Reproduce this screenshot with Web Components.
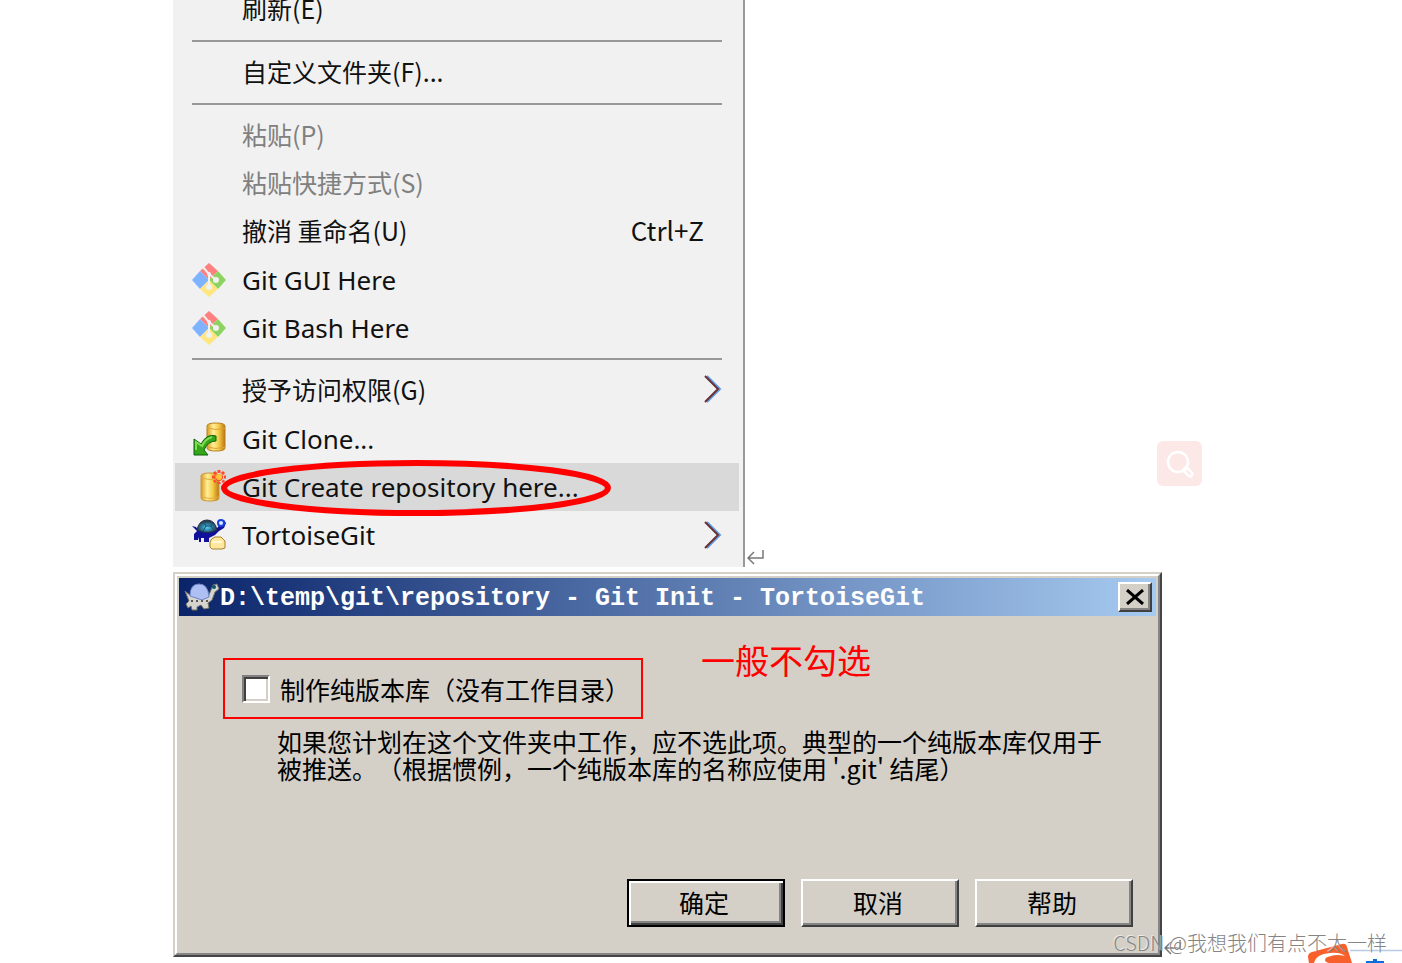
<!DOCTYPE html>
<html lang="zh-CN">
<head>
<meta charset="utf-8">
<meta name="viewport" content="width=device-width, initial-scale=1">
<title>Git Init</title>
<style>
    body {
        margin: 0;
        background: #fff;
        color: #111;
        font-family: "Noto Sans", "Noto Sans CJK SC", sans-serif;
    }
</style>
</head>
<body>
<doc-page>
    <doc-line>
        <context-menu>
            <menu-item>刷新(E)</menu-item>
            <menu-separator></menu-separator>
            <menu-item>自定义文件夹(F)...</menu-item>
            <menu-separator></menu-separator>
            <menu-item disabled>粘贴(P)</menu-item>
            <menu-item disabled>粘贴快捷方式(S)</menu-item>
            <menu-item shortcut="Ctrl+Z">撤消 重命名(U)</menu-item>
            <menu-item icon="git" latin>Git GUI Here</menu-item>
            <menu-item icon="git" latin>Git Bash Here</menu-item>
            <menu-separator></menu-separator>
            <menu-item submenu>授予访问权限(G)</menu-item>
            <menu-item icon="clone" latin>Git Clone...</menu-item>
            <menu-item icon="create" latin active circled>Git Create repository here...</menu-item>
            <menu-item icon="tortoise" latin submenu>TortoiseGit</menu-item>
        </context-menu>
    </doc-line>
    <doc-line>
        <init-dialog caption="D:\temp\git\repository - Git Init - TortoiseGit">
            <bare-option slot="option">制作纯版本库（没有工作目录）</bare-option>
            <span slot="note">一般不勾选</span>
            <span slot="help">如果您计划在这个文件夹中工作，应不选此项。典型的一个纯版本库仅用于<br>被推送。（根据惯例，一个纯版本库的名称应使用 '.git' 结尾）</span>
            <dialog-button slot="actions" default>确定</dialog-button>
            <dialog-button slot="actions">取消</dialog-button>
            <dialog-button slot="actions">帮助</dialog-button>
        </init-dialog>
    </doc-line>
    <search-badge slot="overlay"></search-badge>
    <ime-bar slot="overlay"></ime-bar>
    <page-watermark slot="overlay">CSDN @我想我们有点不太一样</page-watermark>
</doc-page>

<script>
const ICONS = {
    git: `
        <svg width="34" height="34" viewBox="0 0 34 34">
            <path fill="#ff8080" d="M17 0l9 8-9 9-9-9z"/>
            <path fill="#80b3ff" d="M8 8l9 9-9 9-8-9z"/>
            <path fill="#8dd35f" d="M26 8l8 9-8 9-9-9z"/>
            <path fill="#ffe680" d="M17 17l9 9-9 8-9-8z"/>
            <path fill="none" stroke="#f1f1f1" stroke-width="2" d="M11 4l6 7v12M17 11l7 6"/>
            <g fill="#f1f1f1"><circle cx="17" cy="11" r="2"/><circle cx="24" cy="17" r="3"/><circle cx="17" cy="24" r="3"/></g>
        </svg>`,
    clone: `
        <svg width="34" height="34" viewBox="0 0 34 34">
            <defs><linearGradient id="gold"><stop offset="0" stop-color="#d99a1c"/><stop offset=".35" stop-color="#ffef9a"/><stop offset=".65" stop-color="#f6cb48"/><stop offset="1" stop-color="#bd7612"/></linearGradient></defs>
            <path fill="url(#gold)" stroke="#b8801d" d="M15 4q0-3 9-3t9 3v22q0 3-9 3t-9-3z"/>
            <path fill="none" stroke="#dda236" d="M15 6q9 3 18 0M15 25q9 3 18 0"/>
            <path fill="#35a51c" stroke="#0b6407" d="M24 14q-9-3-15 8l-7-5v16h14l-4-5q4-9 12-9z"/>
            <path fill="none" stroke="#84dc55" stroke-width="2" d="M20 15q-7 2-10 9l-6-4v8"/>
        </svg>`,
    create: `
        <svg width="34" height="34" viewBox="0 0 34 34">
            <defs><linearGradient id="gold"><stop offset="0" stop-color="#d99a1c"/><stop offset=".35" stop-color="#ffef9a"/><stop offset=".65" stop-color="#f6cb48"/><stop offset="1" stop-color="#bd7612"/></linearGradient></defs>
            <path fill="url(#gold)" stroke="#c9963a" d="M9 6q0-3 9-3t9 3v22q0 3-9 3t-9-3z"/>
            <path fill="none" stroke="#e0ab44" d="M9 8q9 3 18 0M9 27q9 3 18 0"/>
            <path stroke="#ff4b2b" stroke-width="3" stroke-dasharray="3 1" d="M27 0v14M20 7h14M22 2l10 10M32 2L22 12"/>
            <circle cx="27" cy="7" r="3" fill="#ffc53a"/>
        </svg>`,
    tortoise: `
        <svg width="34" height="34" viewBox="0 0 34 34">
            <defs><radialGradient id="shell" cx=".5" cy=".6"><stop offset="0" stop-color="#5fd0ea"/><stop offset=".5" stop-color="#2786a4"/><stop offset="1" stop-color="#2a3a48"/></radialGradient></defs>
            <path fill="#10109a" d="M0 8l4 1 3 4h15l4-4 2-3q0-4 4-4l2 3-2 5-5 3-4 4-6 3v4h-5v-4h-3v4H7v-5l-1 3H2v-6l3-3z"/>
            <path fill="url(#shell)" stroke="#20304a" d="M5 12Q7 2 15 2t10 10q-9 5-20 0z"/>
            <path fill="none" stroke="#214b78" d="M11 4l3 4-3 5M14 8h5l3 5M19 8l2-3"/>
            <circle cx="29" cy="5" r="4" fill="#1740e0"/><circle cx="29" cy="5" r="2" fill="#dce8ff"/>
            <path fill="#ffe7a0" stroke="#a9822a" d="M18 24q1-4 5-5h6l4 4v7l-3 1H20l-2-2z"/>
            <path fill="none" stroke="#fff8d5" stroke-width="2" d="M20 24h10"/>
        </svg>`
};

class DocPage extends HTMLElement {
    constructor() {
        super();
        this.attachShadow({mode: 'open'}).innerHTML = `
            <style>
                :host {
                    display: block;
                    position: relative;
                    box-sizing: border-box;
                    height: 100vh;
                    padding-left: 173px;
                    overflow: hidden;
                }
                main {
                    display: flex;
                    flex-direction: column;
                    gap: 5px;
                }
            </style>
            <main><slot></slot></main>
            <slot name="overlay"></slot>
        `;
    }
}

// A line of the document, closed with the paragraph mark
class DocLine extends HTMLElement {
    constructor() {
        super();
        this.attachShadow({mode: 'open'}).innerHTML = `
            <style>
                :host {
                    display: flex;
                    align-items: flex-end;
                }
                svg { flex: none; margin-left: 2px; }
            </style>
            <slot></slot>
            <svg width="18" height="18" viewBox="0 0 18 18" fill="none" stroke="#777" stroke-width="1.500" aria-hidden="true">
                <path d="M16 1v8H1M7 3L1 9l6 6"/>
            </svg>
        `;
    }
}

class ContextMenu extends HTMLElement {
    constructor() {
        super();
        this.attachShadow({mode: 'open'}).innerHTML = `
            <style>
                :host {
                    display: block;
                    box-sizing: border-box;
                    width: 572px;
                    padding: 0 4px 8px 2px;
                    background: #f1f1f1;
                    border-right: 2px solid #999;
                    overflow: hidden;
                }
                /* the menu is scrolled a little past its first entry */
                nav { margin-top: -14px; }
            </style>
            <nav><slot></slot></nav>
        `;
    }
}

class MenuSeparator extends HTMLElement {
    constructor() {
        super();
        this.attachShadow({mode: 'open'}).innerHTML = `
            <style>
                :host { display: block; padding: 6px 17px 7px; }
                div { height: 2px; background: #989898; }
            </style>
            <div role="separator"></div>
        `;
    }
}

class MenuItem extends HTMLElement {
    connectedCallback() {
        const icon = ICONS[this.getAttribute('icon')] || '';
        const shortcut = this.getAttribute('shortcut') || '';
        const arrow = this.hasAttribute('submenu') ? `
            <svg class="arrow" width="18" height="30" viewBox="0 0 18 30" fill="none" stroke-width="2">
                <path stroke="#5d9fe8" d="M3 2l13 13L3 28"/>
                <path stroke="#6b3035" d="M1 2l13 13L1 28"/>
            </svg>` : '';
        const ring = this.hasAttribute('circled') ? `
            <svg class="ring" width="390" height="56" viewBox="0 0 390 56">
                <ellipse cx="195" cy="28" rx="192" ry="25" fill="none" stroke="#f00" stroke-width="6"/>
            </svg>` : '';
        this.attachShadow({mode: 'open'}).innerHTML = `
            <style>
                :host { display: block; position: relative; }
                :host([circled]) { z-index: 1; }
                button {
                    display: flex;
                    align-items: center;
                    box-sizing: border-box;
                    width: 100%;
                    height: 48px;
                    padding: 0 17px 4px;
                    border: 0;
                    background: none;
                    color: inherit;
                    font: 25px/32px "Noto Sans CJK SC", sans-serif;
                    text-align: left;
                    white-space: nowrap;
                }
                :host([latin]) button {
                    padding-bottom: 0;
                    font: 26px/32px "Noto Sans", "Noto Sans CJK SC", sans-serif;
                }
                :host([active]) button { background: #d9d9d9; }
                button:disabled { color: #808080; }
                .icon { flex: none; width: 34px; height: 34px; margin-right: 16px; }
                .icon svg { display: block; }
                .label { flex: 1; }
                .shortcut { margin-right: 18px; font-size: 26px; }
                .arrow { flex: none; }
                .ring { position: absolute; left: 46px; top: -3px; pointer-events: none; }
            </style>
            <button type="button" ${this.hasAttribute('disabled') ? 'disabled' : ''}>
                <span class="icon">${icon}</span>
                <span class="label"><slot></slot></span>
                ${shortcut ? `<span class="shortcut">${shortcut}</span>` : ''}
                ${arrow}
            </button>
            ${ring}
        `;
    }
}

class InitDialog extends HTMLElement {
    connectedCallback() {
        this.attachShadow({mode: 'open'}).innerHTML = `
            <style>
                :host {
                    display: block;
                    box-sizing: border-box;
                    width: 989px;
                    border: 2px solid;
                    border-color: #d4d0c8 #454545 #454545 #d4d0c8;
                    color: #000;
                    font: 25px/27px "Noto Sans CJK SC", sans-serif;
                    text-spacing-trim: space-all;
                }
                section {
                    padding: 2px;
                    border: 2px solid;
                    border-color: #fff #858585 #858585 #fff;
                    background: #d4d0c8;
                }
                header {
                    display: flex;
                    align-items: center;
                    height: 38px;
                    padding: 0 4px 0 5px;
                    background: linear-gradient(to right, #0a246a, #a6caf0);
                }
                header svg { flex: none; }
                h1 {
                    flex: 1;
                    margin: 0;
                    padding-top: 4px;
                    color: #fff;
                    font: bold 25px/34px "Liberation Mono", monospace;
                    white-space: pre;
                }
                .close {
                    display: grid;
                    place-items: center;
                    width: 34px;
                    height: 30px;
                    padding: 0;
                    border: 2px solid;
                    border-color: #fff #404040 #404040 #fff;
                    box-shadow: inset -2px -2px #858585;
                    background: #d4d0c8;
                }
                .body { padding: 27px 23px 24px 44px; }
                .row { display: flex; align-items: flex-start; gap: 58px; }
                .option { margin-top: 15px; }
                .note { color: #f00; font-size: 34px; line-height: 34px; }
                p { margin: 9px 0 97px 54px; white-space: nowrap; }
                footer { display: flex; justify-content: flex-end; gap: 16px; }
            </style>
            <section role="dialog" aria-labelledby="caption">
                <header>
                    <svg width="36" height="30" viewBox="0 0 36 30" aria-hidden="true">
                        <path fill="#d5d4ce" stroke="#77736b" d="M1 9l6 5 17 1 3-7 2-5 4-1 2 5-4 3-3 8-4 3 1 5-5 1-3-4-4 2v3h-5l-1-4-3 2-2-4 3-3z"/>
                        <path fill="#aebff3" stroke="#7085c9" d="M6 14Q6 2 15 2t10 13l-7 3z"/>
                        <circle cx="30" cy="5" r="2" fill="#07566b"/>
                        <path stroke="#5c5851" stroke-width="2" stroke-dasharray="2 3" d="M7 19h18"/>
                    </svg>
                    <h1 id="caption">${this.getAttribute('caption')}</h1>
                    <button class="close" type="button" aria-label="关闭">
                        <svg width="18" height="16" viewBox="0 0 18 16" stroke="#000" stroke-width="3"><path d="M1 1l16 14M17 1L1 15"/></svg>
                    </button>
                </header>
                <div class="body">
                    <div class="row">
                        <div class="option"><slot name="option"></slot></div>
                        <div class="note"><slot name="note"></slot></div>
                    </div>
                    <p><slot name="help"></slot></p>
                    <footer><slot name="actions"></slot></footer>
                </div>
            </section>
        `;
    }
}

class BareOption extends HTMLElement {
    constructor() {
        super();
        this.attachShadow({mode: 'open'}).innerHTML = `
            <style>
                :host {
                    display: block;
                    box-sizing: border-box;
                    width: 420px;
                    padding: 15px 16px 14px 17px;
                    border: 2px solid #f00;
                }
                label { display: flex; align-items: center; gap: 10px; line-height: 28px; white-space: nowrap; }
                input {
                    appearance: none;
                    flex: none;
                    width: 28px;
                    height: 28px;
                    margin: 0;
                    border: 2px solid;
                    border-color: #808080 #fff #fff #808080;
                    background: #fff;
                    box-shadow: inset 2px 2px #404040, inset -2px -2px #d4d0c8;
                }
            </style>
            <label><input type="checkbox"><slot></slot></label>
        `;
    }
}

class DialogButton extends HTMLElement {
    constructor() {
        super();
        this.attachShadow({mode: 'open'}).innerHTML = `
            <style>
                :host { display: block; }
                button {
                    display: block;
                    width: 158px;
                    height: 48px;
                    padding: 0 4px 2px 0;
                    border: 2px solid;
                    border-color: #fff #404040 #404040 #fff;
                    background: #d4d0c8;
                    box-shadow: inset -2px -2px #858585;
                    color: #000;
                    font: inherit;
                }
                :host([default]) button {
                    border-color: #000;
                    box-shadow: inset 2px 2px #fff, inset -2px -2px #404040, inset -4px -4px #858585;
                }
            </style>
            <button type="button"><slot></slot></button>
        `;
    }
}

class SearchBadge extends HTMLElement {
    constructor() {
        super();
        this.attachShadow({mode: 'open'}).innerHTML = `
            <style>
                :host { position: absolute; top: 441px; right: 200px; }
                button {
                    display: grid;
                    place-items: center;
                    width: 45px;
                    height: 45px;
                    padding: 0;
                    border: 0;
                    border-radius: 6px;
                    background: #fde8e8;
                }
            </style>
            <button type="button" aria-label="搜索">
                <svg width="28" height="28" viewBox="0 0 28 28" fill="none" stroke="#fff">
                    <circle cx="12" cy="12" r="10" stroke-width="2.500"/>
                    <path stroke-width="7" stroke-linecap="round" d="M20 20l4 4"/>
                    <path stroke="#fde8e8" stroke-width="2" stroke-linecap="round" d="M21 21l3 3"/>
                </svg>
            </button>
        `;
    }
}

// Top edge of the input method's floating bar
class ImeBar extends HTMLElement {
    constructor() {
        super();
        this.attachShadow({mode: 'open'}).innerHTML = `
            <style>
                :host { position: absolute; right: 0; bottom: 0; }
                svg { display: block; }
            </style>
            <svg width="96" height="20" viewBox="0 0 96 20" aria-hidden="true">
                <path stroke="#b9cae6" stroke-width="1.500" d="M44 7.500h52"/>
                <path fill="#f8602b" d="M2 14q0-4 4-5L36 1q4-1 5 3l5 16H3z"/>
                <path fill="#fff" d="M8 20q2-9 16-10 10-1 15 3-8-2-14 0-6 1-6 4 0 2 4 3z"/>
                <path fill="#0b6edb" d="M67 16h4v2h7v2H60v-2h7z"/>
            </svg>
        `;
    }
}

class PageWatermark extends HTMLElement {
    constructor() {
        super();
        this.attachShadow({mode: 'open'}).innerHTML = `
            <style>
                :host {
                    position: absolute;
                    right: 15px;
                    bottom: 6px;
                    color: #858585;
                    font: 300 20px/28px "Noto Sans CJK SC", sans-serif;
                    text-shadow: -1px -1px rgba(255, 255, 255, .6);
                    white-space: nowrap;
                }
            </style>
            <slot></slot>
        `;
    }
}

customElements.define('doc-page', DocPage);
customElements.define('doc-line', DocLine);
customElements.define('context-menu', ContextMenu);
customElements.define('menu-separator', MenuSeparator);
customElements.define('menu-item', MenuItem);
customElements.define('init-dialog', InitDialog);
customElements.define('bare-option', BareOption);
customElements.define('dialog-button', DialogButton);
customElements.define('search-badge', SearchBadge);
customElements.define('ime-bar', ImeBar);
customElements.define('page-watermark', PageWatermark);
</script>
</body>
</html>
